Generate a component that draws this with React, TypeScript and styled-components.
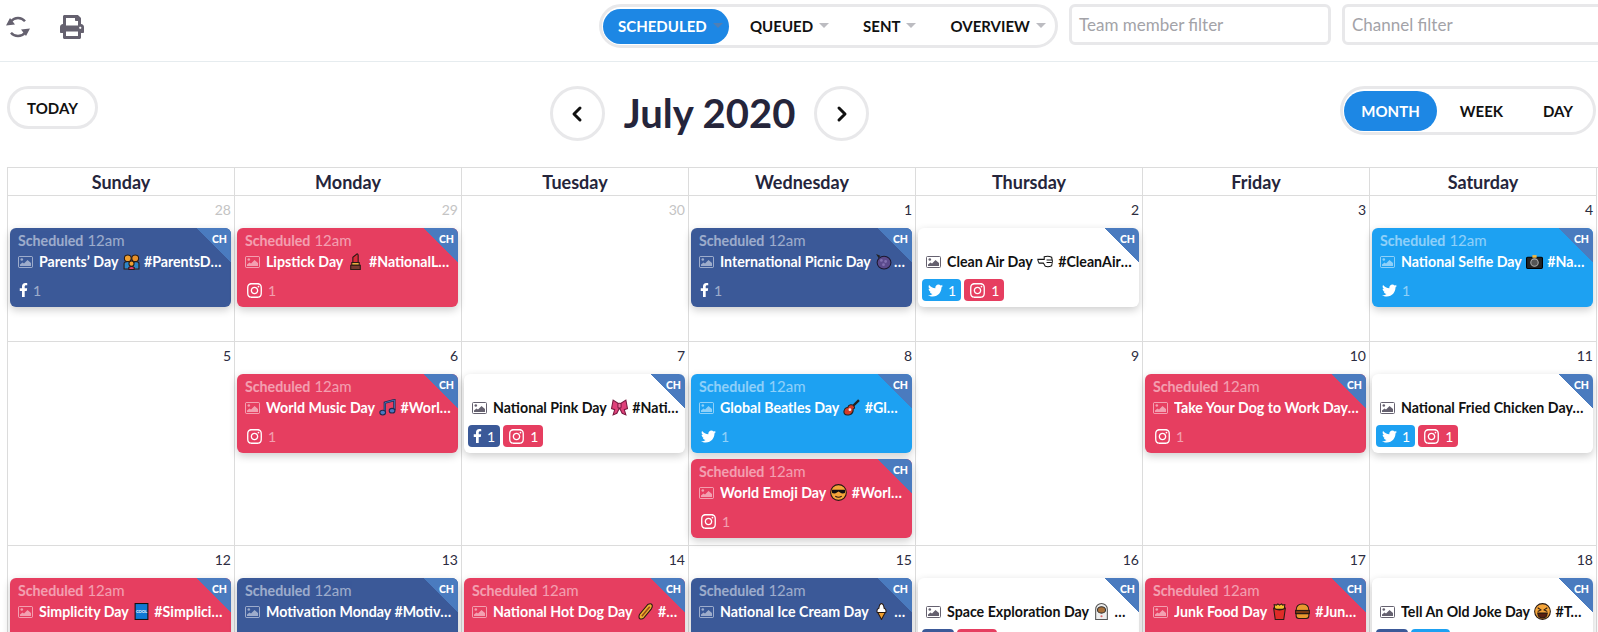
import React from "react";
import styled, { createGlobalStyle } from "styled-components";
import { FaFacebookF, FaInstagram, FaPrint, FaTwitter } from "react-icons/fa";
import { ChevronLeft, ChevronRight } from "lucide-react";

const Global = createGlobalStyle`
  html, body { margin: 0; padding: 0; height: 632px; overflow: hidden; background: #fff; }
  body { font-family: Lato, "Noto Sans", sans-serif; color: #222; }
  * { box-sizing: border-box; }
`;

const Page = styled.div`width: 1598px; height: 632px; overflow: hidden;`;

const TopBar = styled.header`
  display: flex; align-items: flex-start; height: 62px; padding: 4px 0 0 5px;
  border-bottom: 1px solid #e6ecef;
`;
const ToolIcons = styled.div`
  display: flex; align-items: center; gap: 29px; padding-top: 11px; color: #65616f; font-size: 24px;
  svg { display: block; }
`;
const Tabs = styled.nav`
  margin-left: auto; display: flex; align-items: center; gap: 5px; height: 44px; width: 459px;
  padding: 0 1px; border: 3px solid #e8e8ea; border-radius: 22px;
`;
const Tab = styled.div<{ $active?: boolean }>`
  flex: none; display: flex; align-items: center; gap: 6px; height: 35px;
  padding: ${p => (p.$active ? "0 10px 0 15px" : "0 14px 0 15px")};
  ${p => p.$active && "margin-right: 1px; width: 126px;"}
  border-radius: 18px; font-size: 15px; font-weight: 700;
  color: ${p => (p.$active ? "#fff" : "#111")};
  background: ${p => (p.$active ? "#1d87e4" : "transparent")};
`;
const Caret = styled.i<{ $active?: boolean }>`
  width: 0; height: 0; margin-top: -1px; border-style: solid; border-width: 5px 5px 0 5px;
  border-color: ${p => (p.$active ? "#4f7fb4" : "#bcbcc1")} transparent transparent transparent;
`;
const Filter = styled.div<{ $w: number }>`
  flex: none; width: ${p => p.$w}px; height: 41px; margin-left: 11px; padding-left: 7px;
  display: flex; align-items: center; border: 3px solid #e8e8ea; border-radius: 6px;
  font-size: 17px; color: #a3a3a8;
  &:last-child { margin-right: -20px; }
`;

const NavRow = styled.section`
  display: flex; justify-content: space-between; align-items: flex-start;
  height: 105px; padding: 24px 2px 0 7px;
`;
const TodayButton = styled.div`
  width: 91px; height: 43px; display: flex; align-items: center; justify-content: center;
  border: 3px solid #e8e8ea; border-radius: 22px; font-size: 15px; font-weight: 700; color: #111;
`;
const MonthNav = styled.div`display: flex; align-items: center; margin-right: 19px;`;
const Circle = styled.div`
  width: 55px; height: 55px; display: flex; align-items: center; justify-content: center;
  border: 3px solid #e8e8ea; border-radius: 50%; color: #111;
`;
const Title = styled.h1`
  margin: 0 19px 0 19px; font-size: 40px; font-weight: 700; line-height: 55px; color: #25253b;
`;
const Views = styled.div`
  display: flex; align-items: center; width: 256px; height: 49px; padding: 0 1px;
  border: 3px solid #e8e8ea; border-radius: 25px;
`;
const ViewTab = styled.div<{ $active?: boolean; $w: number }>`
  width: ${p => p.$w}px; height: 40px; display: flex; align-items: center; justify-content: center;
  border-radius: 20px; font-size: 15px; font-weight: 700;
  color: ${p => (p.$active ? "#fff" : "#111")};
  background: ${p => (p.$active ? "#1d87e4" : "transparent")};
`;

const Grid = styled.div`
  display: grid; grid-template-columns: repeat(7, 227px); grid-template-rows: 28px 146px 204px 100px;
  margin-left: 7px; border-left: 1px solid #dcdcdc; border-top: 1px solid #dcdcdc;
`;
const DayName = styled.div`
  display: flex; align-items: center; justify-content: center;
  border-right: 1px solid #dcdcdc; border-bottom: 1px solid #dcdcdc;
  font-size: 18px; font-weight: 700; color: #25253b;
`;
const Cell = styled.div`
  display: flex; flex-direction: column; gap: 6px; padding: 0 3px 0 2px; min-height: 0;
  border-right: 1px solid #dcdcdc; border-bottom: 1px solid #dcdcdc;
`;
const DateNum = styled.div<{ $muted?: boolean }>`
  flex: none; height: 32px; margin-bottom: -6px; padding-top: 5px; text-align: right; font-size: 14px; line-height: 17px;
  color: ${p => (p.$muted ? "#c4c4c4" : "#2c2c40")};
`;

type Kind = "fb" | "ig" | "tw" | "white";
const bg: Record<Kind, string> = { fb: "#3b5998", ig: "#e63e60", tw: "#1da1f2", white: "#fff" };

const Card = styled.article<{ $kind: Kind }>`
  position: relative; flex: none; height: 79px; overflow: hidden; border-radius: 6px;
  padding: 3px 6.5px 0 0;
  background: ${p => bg[p.$kind]};
  color: ${p => (p.$kind === "white" ? "#111" : "#fff")};
  box-shadow: 0 3px 8px rgba(0, 0, 0, 0.2);
`;
const Corner = styled.div`
  position: absolute; top: 0; right: 0; width: 35px; height: 35px;
  background: linear-gradient(to top right, transparent 50%, #4a7bbf 50.5%);
`;
const CornerLabel = styled.span`
  position: absolute; top: 5px; right: 4px; font-size: 10.5px; font-weight: 900; line-height: 12px; color: #fff;
`;
const StatusLine = styled.div`
  display: flex; align-items: baseline; gap: 4px; height: 18px; padding-left: 8px;
  line-height: 18px; opacity: 0.5; white-space: nowrap;
`;
const Status = styled.b`font-size: 14.2px; font-weight: 700;`;
const Time = styled.span`font-size: 15px;`;
const TitleLine = styled.div`
  display: flex; align-items: center; gap: 6px; height: 21px; margin-top: 2px; padding-left: 8px;
`;
const PicIcon = styled.svg<{ $white: boolean }>`
  flex: none; width: 15px; height: 12px; color: ${p => (p.$white ? "#65616f" : "rgba(255,255,255,.5)")};
`;
const TitleText = styled.div`
  flex: 1; min-width: 0; overflow: hidden; white-space: nowrap; text-overflow: ellipsis;
  font-size: 14.2px; font-weight: 700; line-height: 21px;
  svg { display: inline-block; vertical-align: -3px; width: 17px; height: 17px; margin: 0 1px; }
`;
const Channels = styled.div`
  display: flex; gap: 3px; margin-top: 7px; padding-left: 4px; height: 22px;
`;
const Chip = styled.div<{ $bg: string }>`
  display: flex; align-items: center; gap: 5px; height: 22px; padding: 0 5px;
  border-radius: 4px; background: ${p => p.$bg}; color: #fff; font-size: 14px;
`;
const Count = styled.span<{ $dim: boolean }>`opacity: ${p => (p.$dim ? 0.5 : 1)};`;
const ChannelGlyph = styled.span<{ $w: number; $size: number }>`
  display: flex; align-items: center; justify-content: center; width: ${p => p.$w}px; font-size: ${p => p.$size}px;
`;

const stroke = "#2a1a12";
const emoji: Record<string, React.ReactNode> = {
  family: <svg viewBox="0 0 16 16"><circle cx="4.500" cy="5" r="3.200" fill="#f0a030" stroke={stroke}/><circle cx="11.500" cy="5" r="3.200" fill="#e8902a" stroke={stroke}/><path d="M1 15V10q0-2 3.500-2T8 10l3.500-2Q15 8 15 10v5Z" fill="#2e86c8" stroke={stroke}/><circle cx="8" cy="10" r="2.400" fill="#f0a030" stroke={stroke}/><path d="M5.500 15.500v-2q2.500-1.500 5 0v2Z" fill="#e23c70" stroke={stroke}/></svg>,
  lipstick: <svg viewBox="0 0 16 16"><path d="M5.500 9V4l4-3.300q1 .3 1 1.500V9Z" fill="#d92c3c" stroke={stroke}/><path d="M4.500 9h7v2.500h-7Z" fill="#e8b040" stroke={stroke}/><path d="M3.500 11.500h9v4h-9Z" fill="#7a3a32" stroke={stroke}/></svg>,
  grapes: <svg viewBox="0 0 16 16"><path d="M1 1l4 1.500-1.500 2.500Z" fill="#222"/><ellipse cx="8.500" cy="9" rx="6.500" ry="6" fill="#5b4a8c" stroke="#1d1830"/><circle cx="6" cy="7" r="1.300" fill="#8070b0"/><circle cx="10" cy="8" r="1.300" fill="#8070b0"/><circle cx="8" cy="11" r="1.300" fill="#8070b0"/></svg>,
  fist: <svg viewBox="0 0 16 16"><path d="M.8 6h6V3.500q4-1 7 .5 1.500 4 0 8-3 1.500-6 .5L6 9.500H2Q.7 7.800.8 6Z" fill="#fff" stroke="#111"/><path d="M9 6.500h5M9 9h5" stroke="#111" fill="none"/></svg>,
  camera: <svg viewBox="0 0 16 16"><rect x=".5" y="4" width="15" height="10.500" rx="1" fill="#222" stroke="#000"/><circle cx="8" cy="9" r="3.500" fill="#555" stroke="#aaa"/><rect x="6" y="2" width="4" height="2.500" fill="#f2b840"/></svg>,
  music: <svg viewBox="0 0 16 16"><path d="M5.500 12V3.500L14.500 1v9.500" fill="none" stroke="#1e2a50" strokeWidth="2.200"/><path d="M5.500 12V3.500L14.500 1v9.500" fill="none" stroke="#4a78c0" strokeWidth=".8"/><ellipse cx="3.500" cy="12.800" rx="2.700" ry="2.200" fill="#4a78c0" stroke="#1e2a50"/><ellipse cx="12.300" cy="11" rx="2.700" ry="2.200" fill="#4a78c0" stroke="#1e2a50"/></svg>,
  ribbon: <svg viewBox="0 0 16 16"><path d="M8 5 2 1 .5 9l3 1-1.500 5 3.500-1.500L8 8.500l2.500 5L14 15l-1.500-5 3-1L14 1Z" fill="#e0407a" stroke="#7a1a40"/><rect x="6.500" y="4" width="3" height="4.500" rx="1" fill="#f070a0" stroke="#7a1a40"/></svg>,
  guitar: <svg viewBox="0 0 16 16"><path d="M15 1 8 8" stroke="#222" strokeWidth="2.200"/><path d="M7 5.500q2.500-.5 3.500 1.500t-1 2.500Q10 13 7 14.500 3 16 1.500 14T2 9q1-1 2.500-1Q5 6 7 5.500Z" fill="#d43c28" stroke="#222"/><circle cx="6.500" cy="10" r="1.300" fill="#eee"/></svg>,
  cool: <svg viewBox="0 0 16 16"><circle cx="8" cy="8" r="7.400" fill="#f4a53a" stroke={stroke}/><path d="M1.500 5.500h13l-.5 3q-2.500 1-4.500-.5L8 7 6.500 8q-2 1.500-4.500.5Z" fill="#111"/><path d="M5 11.500q3 2 6 0" fill="none" stroke={stroke}/></svg>,
  coolSquare: <svg viewBox="0 0 16 16"><rect x="2" y=".5" width="12" height="15" fill="#0f78d4" stroke="#111"/><text x="8" y="9.500" textAnchor="middle" fontSize="3.800" fontWeight="700" fontFamily="Lato" fill="#fff">COOL</text></svg>,
  hotdog: <svg viewBox="0 0 16 16"><path d="M3 15q-2-1-.5-4.500L10 1.500q3-1.500 4 0 1 1.500-.5 4L6.500 14Q5 15.500 3 15Z" fill="#eeb030" stroke={stroke}/><path d="M4.500 12.500 12 3.500" stroke="#9a4a18" strokeWidth="1.500"/></svg>,
  icecream: <svg viewBox="0 0 16 16"><path d="M4.500 9 8 15.500 11.500 9Z" fill="#f0a030" stroke={stroke}/><path d="M4 9Q3 6 5.500 5 6 1 8 .5 10 1 10.500 5 13 6 12 9Z" fill="#fff" stroke={stroke}/></svg>,
  astronaut: <svg viewBox="0 0 16 16"><path d="M2.500 15.500V6a5.500 5.500 0 0 1 11 0v9.500Z" fill="#eee" stroke="#555"/><ellipse cx="8" cy="6.500" rx="3.800" ry="3" fill="#a8703a" stroke="#333"/><circle cx="8" cy="12.500" r="1" fill="#d66"/></svg>,
  fries: <svg viewBox="0 0 16 16"><path d="M3.500 6 3 1.500l2 .5L6.500.8 8 2l2-1.200L11 2l2-.5L12.500 6Z" fill="#f4c030" stroke={stroke}/><path d="M2.500 5q5.500 3 11 0L12 15.500H4Z" fill="#e02c28" stroke={stroke}/></svg>,
  burger: <svg viewBox="0 0 16 16"><path d="M2 7q0-6 6-6t6 6Z" fill="#e8982e" stroke={stroke}/><rect x="1.500" y="7" width="13" height="3" fill="#7a3a14" stroke={stroke}/><path d="M2 10h12v2q0 2.500-2.500 2.500h-7Q2 14.500 2 12Z" fill="#e8982e" stroke={stroke}/></svg>,
  laugh: <svg viewBox="0 0 16 16"><circle cx="8" cy="8" r="7.400" fill="#f4a53a" stroke={stroke}/><path d="m3.500 4.500 3 2-3 1.500M12.500 4.500l-3 2 3 1.500" fill="none" stroke={stroke}/><path d="M3.500 9.500h9Q12 14 8 14T3.500 9.500Z" fill="#5a2010" stroke={stroke}/></svg>,
};

type Post = { kind: Kind; before: string; em?: string; em2?: string; after?: string; chips: ("fb" | "ig" | "tw")[] };
type Day = { n: number; muted?: boolean; posts?: Post[] };

const rows: Day[][] = [
  [
    { n: 28, muted: true, posts: [{ kind: "fb", before: "Parents’ Day ", em: "family", after: " #ParentsDay", chips: ["fb"] }] },
    { n: 29, muted: true, posts: [{ kind: "ig", before: "Lipstick Day ", em: "lipstick", after: " #NationalLipstickDay", chips: ["ig"] }] },
    { n: 30, muted: true },
    { n: 1, posts: [{ kind: "fb", before: "International Picnic Day ", em: "grapes", after: " #Picnic", chips: ["fb"] }] },
    { n: 2, posts: [{ kind: "white", before: "Clean Air Day ", em: "fist", after: " #CleanAirDay", chips: ["tw", "ig"] }] },
    { n: 3 },
    { n: 4, posts: [{ kind: "tw", before: "National Selfie Day ", em: "camera", after: " #NationalSelfieDay", chips: ["tw"] }] },
  ],
  [
    { n: 5 },
    { n: 6, posts: [{ kind: "ig", before: "World Music Day ", em: "music", after: " #WorldMusicDay", chips: ["ig"] }] },
    { n: 7, posts: [{ kind: "white", before: "National Pink Day ", em: "ribbon", after: " #NationalPinkDay", chips: ["fb", "ig"] }] },
    { n: 8, posts: [
      { kind: "tw", before: "Global Beatles Day ", em: "guitar", after: " #GlobalBeatlesDay", chips: ["tw"] },
      { kind: "ig", before: "World Emoji Day ", em: "cool", after: " #WorldEmojiDay", chips: ["ig"] },
    ] },
    { n: 9 },
    { n: 10, posts: [{ kind: "ig", before: "Take Your Dog to Work Day #TakeYourDog", chips: ["ig"] }] },
    { n: 11, posts: [{ kind: "white", before: "National Fried Chicken Day #FriedChicken", chips: ["tw", "ig"] }] },
  ],
  [
    { n: 12, posts: [{ kind: "ig", before: "Simplicity Day ", em: "coolSquare", after: " #SimplicityDay", chips: ["ig"] }] },
    { n: 13, posts: [{ kind: "fb", before: "Motivation Monday #MotivationMonday", chips: ["fb"] }] },
    { n: 14, posts: [{ kind: "ig", before: "National Hot Dog Day ", em: "hotdog", after: " #HotDogDay", chips: ["ig"] }] },
    { n: 15, posts: [{ kind: "fb", before: "National Ice Cream Day ", em: "icecream", after: " #IceCream", chips: ["fb"] }] },
    { n: 16, posts: [{ kind: "white", before: "Space Exploration Day ", em: "astronaut", after: " #Space", chips: ["fb", "ig"] }] },
    { n: 17, posts: [{ kind: "ig", before: "Junk Food Day ", em: "fries", em2: "burger", after: " #JunkFoodDay", chips: ["ig"] }] },
    { n: 18, posts: [{ kind: "white", before: "Tell An Old Joke Day ", em: "laugh", after: " #TellAJoke", chips: ["fb", "tw"] }] },
  ],
];

const glyph = {
  fb: <ChannelGlyph $w={9} $size={14}><FaFacebookF /></ChannelGlyph>,
  ig: <ChannelGlyph $w={17} $size={17}><FaInstagram /></ChannelGlyph>,
  tw: <ChannelGlyph $w={16} $size={15}><FaTwitter /></ChannelGlyph>,
};

const SyncIcon = () => (
  <svg width="26" height="22" viewBox="0 0 26 22" fill="none">
    <path d="M6 5.300A9 9 0 0 1 20 5.300" stroke="currentColor" strokeWidth="2.400" />
    <path d="M20 16.700A9 9 0 0 1 6 16.700" stroke="currentColor" strokeWidth="2.400" />
    <path d="M1 9.500 5 2l5 6.500ZM25 12.500 21 20l-5-6.500Z" fill="currentColor" />
  </svg>
);

const ImageGlyph = ({ white }: { white: boolean }) => (
  <PicIcon $white={white} viewBox="0 0 15 12">
    <rect x=".5" y=".5" width="14" height="11" rx="1" fill="none" stroke="currentColor" />
    <circle cx="3.800" cy="3.500" r="1.300" fill="currentColor" />
    <path d="M2 10V8.500l2.500-2L6 7.500l3.500-3.500L13 7v3Z" fill="currentColor" />
  </PicIcon>
);

function PostCard({ post }: { post: Post }) {
  const white = post.kind === "white";
  return (
    <Card $kind={post.kind}>
      <Corner />
      <CornerLabel>CH</CornerLabel>
      <StatusLine>
        {!white && <><Status>Scheduled</Status><Time>12am</Time></>}
      </StatusLine>
      <TitleLine>
        <ImageGlyph white={white} />
        <TitleText>
          {post.before}
          {post.em && emoji[post.em]}
          {post.em2 && " "}
          {post.em2 && emoji[post.em2]}
          {post.after}
        </TitleText>
      </TitleLine>
      <Channels>
        {post.chips.map(c => (
          <Chip key={c} $bg={white ? bg[c] : "transparent"}>
            {glyph[c]}
            <Count $dim={!white}>1</Count>
          </Chip>
        ))}
      </Channels>
    </Card>
  );
}

export default function App() {
  return (
    <Page>
      <Global />
      <TopBar>
        <ToolIcons><SyncIcon /><FaPrint /></ToolIcons>
        <Tabs>
          <Tab $active>SCHEDULED<Caret $active /></Tab>
          <Tab>QUEUED<Caret /></Tab>
          <Tab>SENT<Caret /></Tab>
          <Tab>OVERVIEW<Caret /></Tab>
        </Tabs>
        <Filter $w={262}>Team member filter</Filter>
        <Filter $w={276}>Channel filter</Filter>
      </TopBar>
      <NavRow>
        <TodayButton>TODAY</TodayButton>
        <MonthNav>
          <Circle><ChevronLeft size={24} strokeWidth={3} /></Circle>
          <Title>July 2020</Title>
          <Circle><ChevronRight size={24} strokeWidth={3} /></Circle>
        </MonthNav>
        <Views>
          <ViewTab $active $w={93}>MONTH</ViewTab>
          <ViewTab $w={89}>WEEK</ViewTab>
          <ViewTab $w={64}>DAY</ViewTab>
        </Views>
      </NavRow>
      <Grid>
        {["Sunday", "Monday", "Tuesday", "Wednesday", "Thursday", "Friday", "Saturday"].map(d => (
          <DayName key={d}>{d}</DayName>
        ))}
        {rows.flat().map(day => (
          <Cell key={`${day.n}-${day.muted ? "p" : "c"}`}>
            <DateNum $muted={day.muted}>{day.n}</DateNum>
            {day.posts?.map(p => <PostCard key={p.before} post={p} />)}
          </Cell>
        ))}
      </Grid>
    </Page>
  );
}
